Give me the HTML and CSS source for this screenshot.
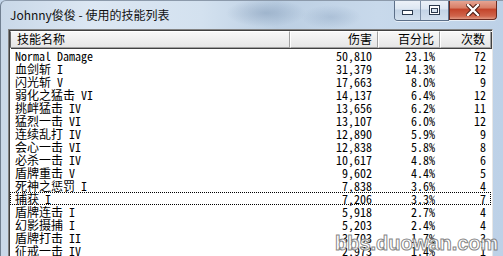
FILE: index.html
```html
<!DOCTYPE html>
<html lang="zh-CN">
<head>
    <meta charset="UTF-8">
    <title>Johnny俊俊 - 使用的技能列表</title>
    <link rel="stylesheet" href="styles.css">
</head>
<body>
    <div class="window">
        <div class="titlebar">
            <span class="title">Johnny俊俊 - 使用的技能列表</span>
            <div class="caption-buttons">
                <div class="btn-group">
                    <div class="cap-btn min">
                        <svg width="11" height="5" viewBox="0 0 11 5"><rect x="0.5" y="0.5" width="10" height="4" fill="#fff" stroke="#2c3a4d"/></svg>
                    </div>
                    <div class="cap-btn max">
                        <svg width="11" height="10" viewBox="0 0 11 10"><rect x="0.5" y="0.5" width="10" height="9" fill="#fff" stroke="#2c3a4d"/><rect x="2.5" y="3.5" width="6" height="4" fill="#d7e2ee" stroke="#2c3a4d"/></svg>
                    </div>
                </div>
                <div class="cap-btn close">
                    <svg width="14" height="12" viewBox="0 0 14 12"><path d="M2 1 L12 11 M12 1 L2 11" stroke="#4a1a12" stroke-width="4.4" stroke-linecap="square"/><path d="M2 1 L12 11 M12 1 L2 11" stroke="#fff" stroke-width="2.4" stroke-linecap="square"/></svg>
                </div>
            </div>
        </div>
        <div class="frame-body">
            <div class="listview">
                <div class="lv-header">
                    <div class="hcell">技能名称</div>
                    <div class="hcell num">伤害</div>
                    <div class="hcell num">百分比</div>
                    <div class="hcell num">次数</div>
                </div>
                <div class="lv-rows">
                    <div class="lv-row"><span>Normal Damage</span><span class="num">50,810</span><span class="num">23.1%</span><span class="num">72</span></div>
                    <div class="lv-row"><span>血剑斩 I</span><span class="num">31,379</span><span class="num">14.3%</span><span class="num">12</span></div>
                    <div class="lv-row"><span>闪光斩 V</span><span class="num">17,663</span><span class="num">8.0%</span><span class="num">9</span></div>
                    <div class="lv-row"><span>弱化之猛击 VI</span><span class="num">14,137</span><span class="num">6.4%</span><span class="num">12</span></div>
                    <div class="lv-row"><span>挑衅猛击 IV</span><span class="num">13,656</span><span class="num">6.2%</span><span class="num">11</span></div>
                    <div class="lv-row"><span>猛烈一击 VI</span><span class="num">13,107</span><span class="num">6.0%</span><span class="num">12</span></div>
                    <div class="lv-row"><span>连续乱打 IV</span><span class="num">12,890</span><span class="num">5.9%</span><span class="num">9</span></div>
                    <div class="lv-row"><span>会心一击 VI</span><span class="num">12,838</span><span class="num">5.8%</span><span class="num">8</span></div>
                    <div class="lv-row"><span>必杀一击 IV</span><span class="num">10,617</span><span class="num">4.8%</span><span class="num">6</span></div>
                    <div class="lv-row"><span>盾牌重击 V</span><span class="num">9,602</span><span class="num">4.4%</span><span class="num">5</span></div>
                    <div class="lv-row"><span>死神之惩罚 I</span><span class="num">7,838</span><span class="num">3.6%</span><span class="num">4</span></div>
                    <div class="lv-row focused"><span>捕获 I</span><span class="num">7,206</span><span class="num">3.3%</span><span class="num">7</span></div>
                    <div class="lv-row"><span>盾牌连击 I</span><span class="num">5,918</span><span class="num">2.7%</span><span class="num">4</span></div>
                    <div class="lv-row"><span>幻影摄捕 I</span><span class="num">5,203</span><span class="num">2.4%</span><span class="num">4</span></div>
                    <div class="lv-row"><span>盾牌打击 II</span><span class="num">3,703</span><span class="num">1.7%</span><span class="num">3</span></div>
                    <div class="lv-row"><span>征戒一击 IV</span><span class="num">2,973</span><span class="num">1.4%</span><span class="num">1</span></div>
                </div>
            </div>
        </div>
        <div class="watermark">bbs.duowan.com</div>
    </div>
</body>
</html>
```

FILE: styles.css
```css
* {
    box-sizing: border-box;
    margin: 0;
    padding: 0;
}

body {
    width: 503px;
    height: 256px;
    overflow: hidden;
    background: #c4d6ea;
    font-family: "Noto Sans Mono CJK SC", "Liberation Mono", "Noto Sans CJK SC", monospace;
    font-size: 12px;
    color: #000;
}

.window {
    position: relative;
    height: 256px;
    display: flex;
    flex-direction: column;
    overflow: hidden;
    border-left: 1px solid #707f90;
    border-top: 1px solid #8c9aab;
    border-top-left-radius: 6px;
    background:
        radial-gradient(ellipse 40px 14px at 265px 12px, rgba(120,145,175,0.45), transparent),
        radial-gradient(ellipse 30px 12px at 330px 16px, rgba(130,155,185,0.35), transparent),
        linear-gradient(90deg, #c9d8e8 0%, #dce7f3 18%, #d3e1ef 40%, #bccfe3 55%, #c8d9eb 75%, #bdd1e7 100%);
}

.titlebar {
    height: 28px;
    display: flex;
    justify-content: space-between;
    align-items: flex-start;
    padding-left: 9px;
}

.title {
    font-family: "Noto Sans CJK SC", "DejaVu Sans", sans-serif;
    font-size: 12px;
    line-height: 16px;
    margin-top: 6px;
    color: #111;
}

.caption-buttons {
    display: flex;
    margin-right: 6px;
    margin-top: -1px;
}

.btn-group {
    display: flex;
    border: 1px solid #5c6f88;
    border-top: none;
    border-radius: 0 0 0 4px;
    overflow: hidden;
    box-shadow: 0 1px 0 rgba(255,255,255,0.6);
}

.cap-btn {
    height: 20px;
    display: flex;
    align-items: center;
    justify-content: center;
}

.cap-btn.min,
.cap-btn.max {
    background: linear-gradient(#eef3f9 0%, #dde7f2 45%, #c4d4e6 50%, #d3e0ee 100%);
}

.cap-btn.min {
    width: 26px;
    border-right: 1px solid #7d8fa6;
    padding-top: 5px;
}

.cap-btn.max {
    width: 27px;
}

.cap-btn.close {
    width: 48px;
    border: 1px solid #6a2a20;
    border-top: none;
    border-radius: 0 0 4px 0;
    background: linear-gradient(#e8a998 0%, #d98068 40%, #c4452b 50%, #d0654c 85%, #e09a84 100%);
    box-shadow: 0 1px 0 rgba(255,255,255,0.6);
}

.frame-body {
    flex: 1;
    padding: 0 10px 0 7px;
    min-height: 0;
}

.listview {
    height: 100%;
    background: #fff;
    border-top: 1px solid #828282;
    border-left: 1px solid #828282;
    border-right: 1px solid #e6e6e6;
    box-shadow: inset 1px 1px 0 #404040;
    padding: 1px 1px 0 1px;
    overflow: hidden;
}

.lv-header,
.lv-row {
    display: grid;
    grid-template-columns: 280px 88px 62px 51px;
}

.hcell {
    height: 17px;
    line-height: 14px;
    padding: 0 5px 0 6px;
    background: linear-gradient(#f7f7f7, #e6e6e6);
    border-top: 1px solid #fff;
    border-left: 1px solid #fff;
    border-right: 1px solid #a0a0a0;
    border-bottom: 1px solid #a0a0a0;
    box-shadow: 1px 1px 0 #404040;
    white-space: nowrap;
}

.hcell:first-child {
    border-left: 1px solid #6a6a6a;
}

.hcell.num {
    text-align: right;
}

.lv-rows {
    padding-top: 1px;
}

.lv-row {
    height: 13px;
    line-height: 13px;
    white-space: nowrap;
}

.lv-row span {
    padding-left: 5px;
}

.lv-row .num {
    text-align: right;
    padding: 0 5px 0 0;
}

.lv-row .num:nth-child(2) {
    padding-right: 6px;
}

.lv-row.focused {
    outline: 1px dotted #000;
    outline-offset: -1px;
}

.watermark {
    position: absolute;
    left: 334px;
    bottom: 3px;
    font-family: "Liberation Sans", Arial, sans-serif;
    font-weight: bold;
    font-size: 20px;
    line-height: 20px;
    color: rgba(255,255,255,0.85);
    -webkit-text-stroke: 1px rgba(120,120,120,0.9);
    white-space: nowrap;
}
```
